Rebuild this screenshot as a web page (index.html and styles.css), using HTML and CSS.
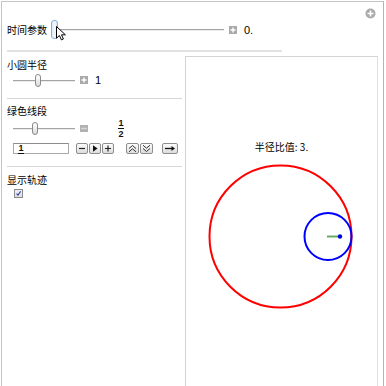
FILE: index.html
```html
<!DOCTYPE html>
<html lang="zh">
<head>
    <meta charset="UTF-8">
    <meta name="viewport" content="width=device-width, initial-scale=1.0">
    <title>Manipulate</title>
    <link rel="stylesheet" href="styles.css">
</head>
<body>

    <div class="panel">
        <span class="panel-menu">
            <svg width="11" height="11" viewBox="0 0 11 11">
                <circle cx="5.5" cy="5.5" r="5" fill="#a9a9a9"/>
                <path d="M5.5 2.5v6M2.5 5.5h6" stroke="#fff" stroke-width="1.6"/>
            </svg>
        </span>

        <div class="top-row">
            <span class="label">时间参数</span>
            <div class="slider slider-long">
                <span class="thumb thumb-hover"></span>
                <span class="track"></span>
            </div>
            <span class="small-btn">
                <svg width="8" height="8" viewBox="0 0 8 8"><path d="M4 1.5v5M1.5 4h5" stroke="#fff" stroke-width="1.4"/></svg>
            </span>
            <span class="value">0.</span>
            <svg class="cursor" width="11" height="15" viewBox="0 0 11 15">
                <path d="M0.5 0.5V12.2L3.4 9.5L5.4 13.9L7.4 13L5.5 8.8H9.4Z" fill="#fff" stroke="#000" stroke-width="1" stroke-linejoin="round"/>
            </svg>
        </div>

        <div class="sep sep-wide"></div>

        <div class="main">
            <div class="controls">
                <div class="label label-first">小圆半径</div>
                <div class="ctrl-row">
                    <div class="slider slider-short">
                        <span class="track lead-radius"></span>
                        <span class="thumb"></span>
                        <span class="track"></span>
                    </div>
                    <span class="small-btn">
                        <svg width="8" height="8" viewBox="0 0 8 8"><path d="M4 1.5v5M1.5 4h5" stroke="#fff" stroke-width="1.4"/></svg>
                    </span>
                    <span class="value">1</span>
                </div>

                <div class="sep"></div>

                <div class="label">绿色线段</div>
                <div class="ctrl-row ctrl-row-tall">
                    <div class="slider slider-short">
                        <span class="track lead-green"></span>
                        <span class="thumb"></span>
                        <span class="track"></span>
                    </div>
                    <span class="small-btn small-btn-minus">
                        <svg width="8" height="7" viewBox="0 0 8 7"><path d="M1 3.5h6" stroke="#d6d6d6" stroke-width="1.4"/></svg>
                    </span>
                    <span class="fraction">
                        <span>1</span>
                        <span class="fraction-bar"></span>
                        <span>2</span>
                    </span>
                </div>
                <div class="anim-row">
                    <div class="input-box">
                        <span class="fraction fraction-input">
                            <span>1</span>
                            <span class="fraction-bar"></span>
                        </span>
                    </div>
                    <div class="btn-group">
                        <span class="btn">
                            <svg width="10" height="9" viewBox="0 0 10 9"><path d="M2 4.5h6" stroke="#222" stroke-width="1.2"/></svg>
                        </span>
                        <span class="btn">
                            <svg width="10" height="9" viewBox="0 0 10 9"><path d="M3 1.2L7.5 4.5L3 7.8Z" fill="#111"/></svg>
                        </span>
                        <span class="btn">
                            <svg width="10" height="9" viewBox="0 0 10 9"><path d="M5 1.5v6M2 4.5h6" stroke="#222" stroke-width="1.2"/></svg>
                        </span>
                    </div>
                    <div class="btn-group btn-group-speed">
                        <span class="btn btn-wide">
                            <svg width="11" height="9" viewBox="0 0 11 9"><path d="M2 4.5L5.5 1.5L9 4.5M2 7.8L5.5 4.8L9 7.8" fill="none" stroke="#333" stroke-width="1"/></svg>
                        </span>
                        <span class="btn btn-wide">
                            <svg width="11" height="9" viewBox="0 0 11 9"><path d="M2 1.2L5.5 4.2L9 1.2M2 4.5L5.5 7.5L9 4.5" fill="none" stroke="#333" stroke-width="1"/></svg>
                        </span>
                    </div>
                    <span class="btn btn-dir">
                        <svg width="14" height="9" viewBox="0 0 14 9"><path d="M2 4.5h8" stroke="#111" stroke-width="1.3"/><path d="M8.5 2L12 4.5L8.5 7Z" fill="#111"/></svg>
                    </span>
                </div>

                <div class="sep sep-lower"></div>

                <div class="label">显示轨迹</div>
                <span class="checkbox">
                    <svg width="9" height="9" viewBox="0 0 9 9"><path d="M2 4.6L3.8 6.6L7.2 1.8" fill="none" stroke="#2a3fb8" stroke-width="1.3"/></svg>
                </span>
            </div>

            <div class="plot">
                <div class="plot-label">半径比值: 3.</div>
                <svg class="plot-canvas" width="191" height="200" viewBox="0 0 191 200">
                    <circle cx="94.5" cy="82.5" r="71" fill="none" stroke="#ff0000" stroke-width="2"/>
                    <circle cx="142" cy="82.5" r="23.5" fill="none" stroke="#0000ff" stroke-width="2"/>
                    <line x1="141" y1="82.5" x2="154" y2="82.5" stroke="#66aa5f" stroke-width="2"/>
                    <circle cx="154" cy="82.5" r="2.2" fill="#0000e0"/>
                </svg>
            </div>
        </div>
    </div>

</body>
</html>
```

FILE: styles.css
```css
* {
    margin: 0;
    padding: 0;
    box-sizing: border-box;
}

body {
    background: #fff;
    overflow: hidden;
    font-family: "Noto Sans CJK SC", "Liberation Sans", sans-serif;
    color: #000;
}

.panel {
    position: relative;
    width: 383px;
    height: 420px;
    margin: 1px 0 0 1px;
    padding: 18px 5px 0 5px;
    border: 1px solid #c4c4c4;
    border-right-color: #b4b4b4;
    background: #fff;
}

.panel-menu {
    position: absolute;
    left: 363px;
    top: 6px;
    line-height: 0;
}

.label {
    font-size: 10px;
    line-height: 14px;
    white-space: nowrap;
}

.label-first {
    margin-top: 6px;
}

.top-row {
    position: relative;
    display: flex;
    align-items: center;
    height: 19px;
}

.top-row .slider {
    margin-left: 4px;
}

.slider {
    display: flex;
    align-items: center;
}

.slider-long {
    width: 173px;
    height: 19px;
}

.slider-short {
    width: 62px;
    height: 14px;
    margin-left: 6px;
}

.track {
    flex: 1;
    height: 1px;
    background: #a4a4a4;
    box-shadow: 0 1px 0 #ececec;
}

.lead-radius {
    flex: none;
    width: 22px;
}

.lead-green {
    flex: none;
    width: 19px;
}

.thumb {
    flex: none;
    width: 6px;
    height: 13px;
    border: 1px solid #8a8a8a;
    border-radius: 3px;
    background: linear-gradient(#ffffff, #dcdcdc);
}

.thumb-hover {
    width: 7px;
    height: 19px;
    border-color: #86aee0;
    background: linear-gradient(90deg, #dce9f8, #f4f8fd 60%, #d6e4f5);
}

.small-btn {
    display: inline-flex;
    align-items: center;
    justify-content: center;
    width: 8px;
    height: 8px;
    margin-left: 5px;
    background: #a9a9a9;
    line-height: 0;
}

.small-btn-minus {
    height: 7px;
    background: #b2b2b2;
}

.value {
    margin-left: 7px;
    font-family: "Liberation Sans", sans-serif;
    font-size: 11px;
    line-height: 14px;
}

.cursor {
    position: absolute;
    left: 49px;
    top: 6px;
}

.sep {
    height: 1px;
    margin-top: 11px;
    background: #d6d6d6;
}

.sep-wide {
    width: 275px;
    height: 2px;
    background: #e2e2e2;
}

.sep-lower {
    margin-top: 12px;
}

.sep + .label {
    margin-top: 5px;
}

.sep-lower + .label {
    margin-top: 6px;
}

.main {
    display: flex;
    align-items: flex-start;
    gap: 3px;
}

.controls {
    width: 175px;
    flex: none;
}

.ctrl-row {
    display: flex;
    align-items: center;
    height: 14px;
    margin-top: 1px;
}

.ctrl-row-tall {
    height: 20px;
    margin-top: 0;
}

.fraction {
    display: inline-flex;
    flex-direction: column;
    align-items: center;
    margin-left: 30px;
    font-family: "Liberation Sans", sans-serif;
    font-size: 9px;
    font-weight: bold;
    line-height: 8px;
    color: #111;
}

.fraction-bar {
    width: 6px;
    height: 1px;
    margin: 1px 0;
    background: #111;
}

.anim-row {
    display: flex;
    align-items: center;
    height: 12px;
    margin-top: 4px;
}

.input-box {
    display: flex;
    align-items: flex-start;
    width: 56px;
    height: 11px;
    margin-left: 6px;
    padding-left: 4px;
    border: 1px solid #a8a8a8;
    border-top-color: #8c8c8c;
    background: #fff;
}

.fraction-input {
    margin-left: 0;
}

.btn-group {
    display: flex;
    gap: 1px;
    margin-left: 7px;
}

.btn-group-speed {
    margin-left: 12px;
}

.btn {
    display: inline-flex;
    align-items: center;
    justify-content: center;
    width: 12px;
    height: 11px;
    border: 1px solid #8e8e8e;
    border-radius: 2px;
    background: linear-gradient(#fdfdfd, #dcdcdc);
    line-height: 0;
}

.btn-wide {
    width: 13px;
}

.btn-dir {
    width: 16px;
    margin-left: 9px;
}

.checkbox {
    display: flex;
    align-items: center;
    justify-content: center;
    width: 9px;
    height: 9px;
    margin: 2px 0 0 7px;
    border: 1px solid #8b8b8b;
    background: linear-gradient(#f0f0f0, #dedede);
    line-height: 0;
}

.plot {
    width: 193px;
    height: 360px;
    margin-top: 4px;
    border: 1px solid #d4d4d4;
    border-right-color: #e0e0e0;
    background: #fff;
}

.plot-label {
    margin-top: 83px;
    font-size: 10px;
    line-height: 14px;
    text-align: center;
}

.plot-canvas {
    display: block;
}
```
